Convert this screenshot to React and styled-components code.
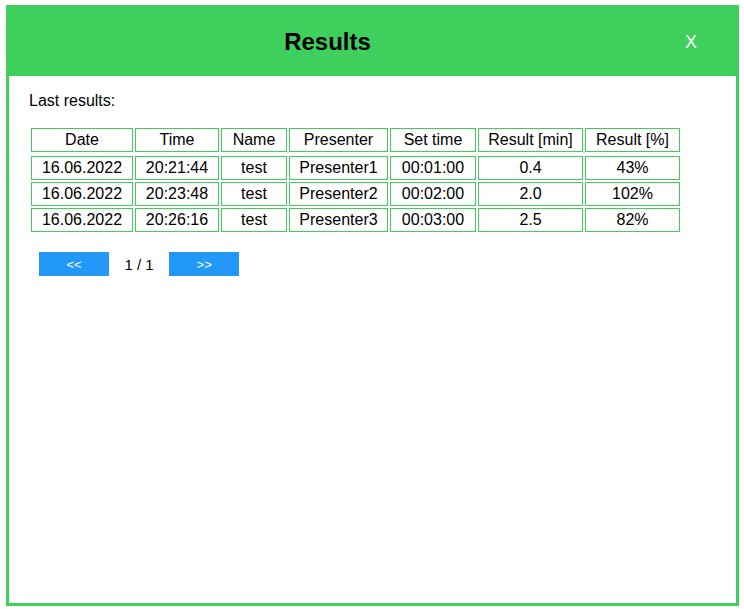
import React from 'react';
import styled, { createGlobalStyle } from 'styled-components';

const rows = [
    ['16.06.2022', '20:21:44', 'test', 'Presenter1', '00:01:00', '0.4', '43%'],
    ['16.06.2022', '20:23:48', 'test', 'Presenter2', '00:02:00', '2.0', '102%'],
    ['16.06.2022', '20:26:16', 'test', 'Presenter3', '00:03:00', '2.5', '82%'],
];

const columns = ['Date', 'Time', 'Name', 'Presenter', 'Set time', 'Result [min]', 'Result [%]'];

const App = () => {
    return (
        <>
            <GlobalStyle />
            <Modal>
                <Header>
                    <Title>Results</Title>
                    <Close>X</Close>
                </Header>
                <Content>
                    <Label>Last results:</Label>
                    <Table>
                        {columns.map((c) => (
                            <HeadCell key={c}>{c}</HeadCell>
                        ))}
                        {rows.map((r, i) =>
                            r.map((v, j) => <Cell key={i + '-' + j}>{v}</Cell>)
                        )}
                    </Table>
                    <Pager>
                        <PageButton>&lt;&lt;</PageButton>
                        <PageInfo>1 / 1</PageInfo>
                        <PageButton>&gt;&gt;</PageButton>
                    </Pager>
                </Content>
            </Modal>
        </>
    );
};

export default App;

const GlobalStyle = createGlobalStyle`
    body {
        margin:0;
        background:#fff;
        font-family:"Liberation Sans", Arial, sans-serif;
        color:#000;
    }
`;

const Modal = styled.div`
    box-sizing:border-box;
    margin:5px 0 0 6px;
    width:733px;
    height:601px;
    border:3px solid #3ecf5c;
    background:#fff;
    display:flex;
    flex-direction:column;
`;

const Header = styled.div`
    height:68px;
    background:#3ecf5c;
    display:flex;
    align-items:center;
`;

const Title = styled.h1`
    flex:1;
    margin:0;
    text-align:center;
    font-size:24px;
    font-weight:bold;
    color:#000;
`;

const Close = styled.div`
    width:90px;
    text-align:center;
    color:#fff;
    font-size:18px;
    cursor:pointer;
`;

const Content = styled.div`
    padding:16px 20px 0 20px;
`;

const Label = styled.p`
    margin:0;
    font-size:16px;
    line-height:18px;
`;

const Table = styled.div`
    margin:18px 0 0 2px;
    display:grid;
    grid-template-columns:102px 84px 66px 99px 86px 105px 95px;
    gap:2px;
    width:max-content;
`;

const Cell = styled.div`
    box-sizing:border-box;
    height:24px;
    border:1px solid #3ecf5c;
    font-size:16px;
    line-height:22px;
    text-align:center;
    white-space:nowrap;
`;

const HeadCell = styled(Cell)`
    margin-bottom:2px;
`;

const Pager = styled.div`
    display:flex;
    align-items:center;
    gap:15.5px;
    margin:20px 0 0 10px;
`;

const PageButton = styled.button`
    width:70px;
    height:24px;
    border:none;
    padding:0;
    background:#2299f8;
    color:#fff;
    font-family:"Liberation Sans", Arial, sans-serif;
    font-size:13px;
    cursor:pointer;
`;

const PageInfo = styled.span`
    font-size:15px;
`;
